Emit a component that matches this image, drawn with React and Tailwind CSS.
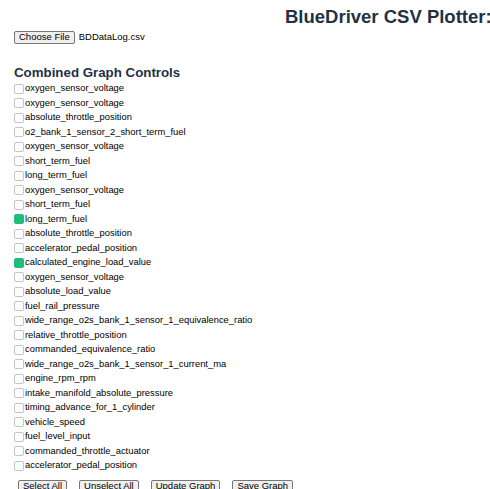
import { useState } from "react";

const fields = [
  "oxygen_sensor_voltage",
  "oxygen_sensor_voltage",
  "absolute_throttle_position",
  "o2_bank_1_sensor_2_short_term_fuel",
  "oxygen_sensor_voltage",
  "short_term_fuel",
  "long_term_fuel",
  "oxygen_sensor_voltage",
  "short_term_fuel",
  "long_term_fuel",
  "absolute_throttle_position",
  "accelerator_pedal_position",
  "calculated_engine_load_value",
  "oxygen_sensor_voltage",
  "absolute_load_value",
  "fuel_rail_pressure",
  "wide_range_o2s_bank_1_sensor_1_equivalence_ratio",
  "relative_throttle_position",
  "commanded_equivalence_ratio",
  "wide_range_o2s_bank_1_sensor_1_current_ma",
  "engine_rpm_rpm",
  "intake_manifold_absolute_pressure",
  "timing_advance_for_1_cylinder",
  "vehicle_speed",
  "fuel_level_input",
  "commanded_throttle_actuator",
  "accelerator_pedal_position",
];

function Btn({ children }) {
  return (
    <button className="h-[13px] px-[4px] border border-[#767676] rounded-[2px] bg-[#efefef] text-[9.5px] leading-[10px] text-black">
      {children}
    </button>
  );
}

export default function App() {
  const [checked, setChecked] = useState({ 9: true, 12: true });

  return (
    <div className="h-[489px] w-[490px] overflow-hidden bg-white font-['Liberation_Sans',Arial,sans-serif] text-black">
      <h1 className="pl-[285px] pt-[6px] whitespace-nowrap text-[18.5px] font-bold leading-[22px] text-[#1f3147]">
        BlueDriver CSV Plotter:
      </h1>

      <div className="mt-[2px] flex items-center gap-[4px] pl-[14px]">
        <Btn>Choose File</Btn>
        <span className="text-[9.5px]">BDDataLog.csv</span>
      </div>

      <h3 className="mt-[21px] pl-[14px] text-[13.3px] font-bold leading-[15px] text-[#1f3147]">
        Combined Graph Controls
      </h3>

      <div className="mt-[1px] flex flex-col pl-[14px]">
        {fields.map((f, i) => (
          <label
            key={i}
            className="flex h-[14.5px] cursor-pointer items-center text-[9.4px]"
            onClick={() => setChecked((c) => ({ ...c, [i]: !c[i] }))}
          >
            <span
              className={`mr-[1px] h-[10px] w-[10px] rounded-[2px] border ${
                checked[i] ? "border-[#1fbe7b] bg-[#1fbe7b]" : "border-[#c4c4c4] bg-white"
              }`}
            />
            {f}
          </label>
        ))}
      </div>

      <div className="mt-[7px] flex gap-[12px] pl-[18px]">
        <Btn>Select All</Btn>
        <Btn>Unselect All</Btn>
        <Btn>Update Graph</Btn>
        <Btn>Save Graph</Btn>
      </div>
    </div>
  );
}
